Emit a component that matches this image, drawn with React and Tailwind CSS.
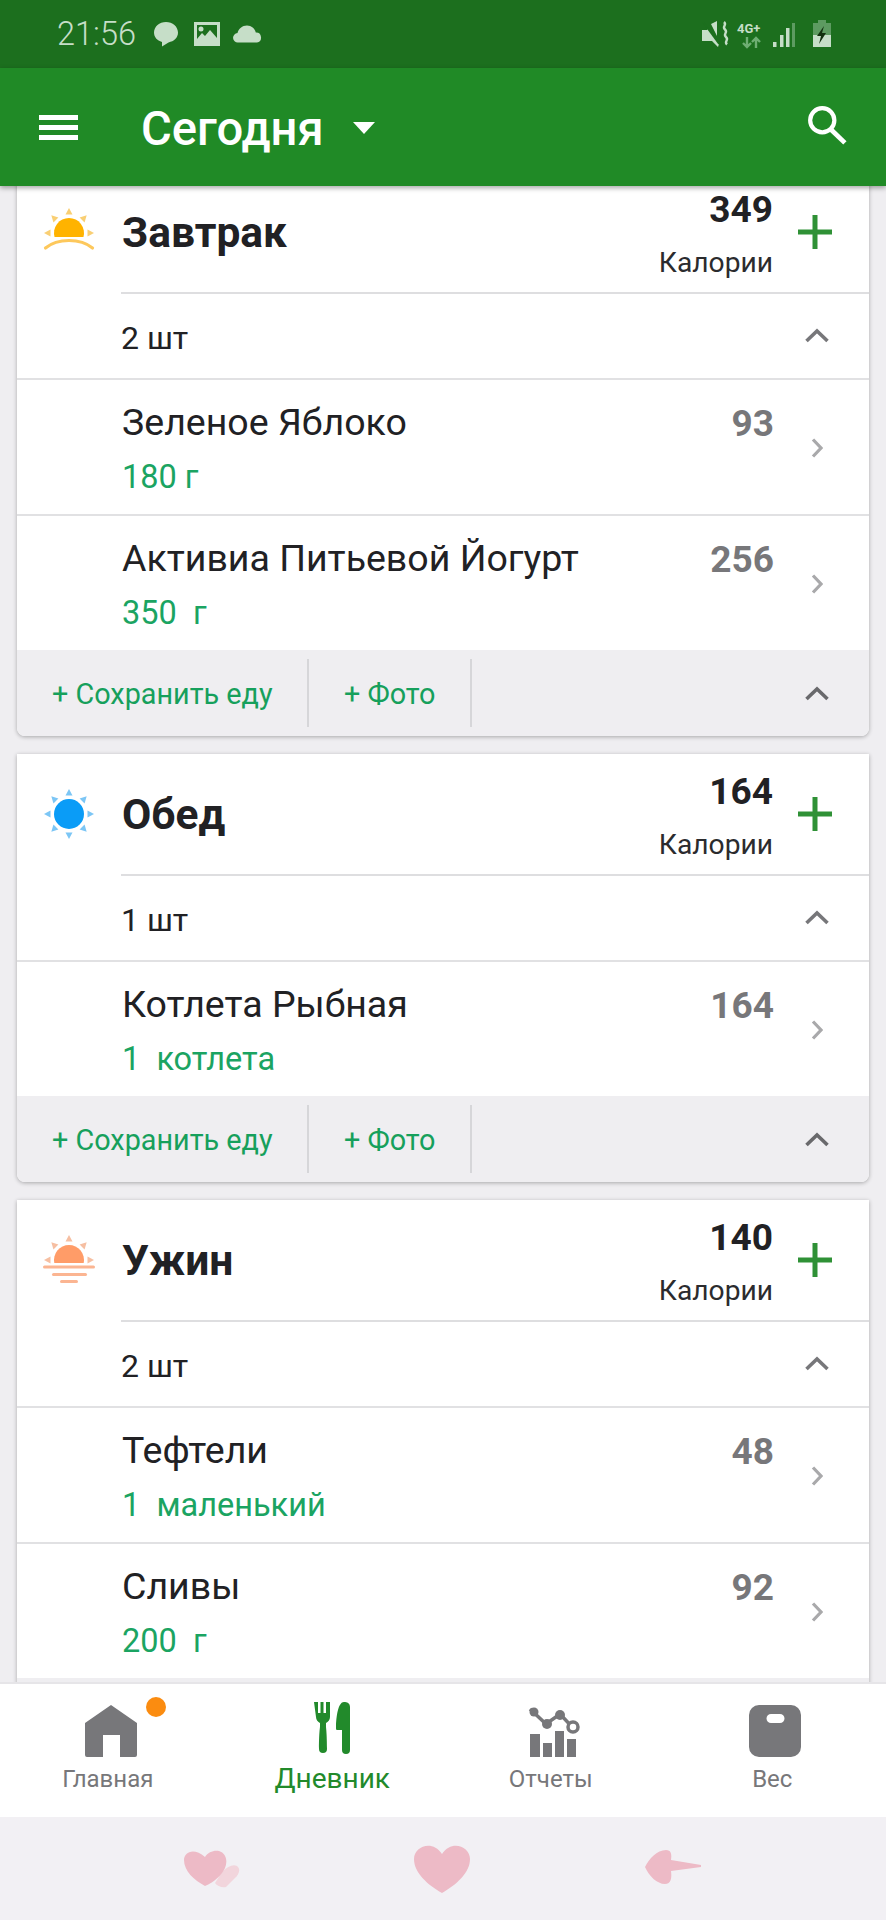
const SunRays = ({ color, cy = 26, rays }) => (
  <g fill={color}>
    {rays.map((a) => (
      <polygon key={a} points="26,1 29.5,7.5 22.5,7.5" transform={`rotate(${a} 26 ${cy}) translate(0 ${cy - 26})`} />
    ))}
  </g>
);

const BreakfastIcon = () => (
  <svg width="52" height="52" viewBox="0 0 52 52" className="shrink-0">
    <SunRays color="#f9cf74" cy={27} rays={[-90, -45, 0, 45, 90]} />
    <path d="M11.540 31A15 15 0 1 1 40.460 31z" fill="#ffb300" />
    <path d="M2.500 42c6-5 14-7.500 23.500-7.500S43.500 37 49.500 42" fill="none" stroke="#fdc85c" strokeWidth="3.2" strokeLinecap="round" />
  </svg>
);

const LunchIcon = () => (
  <svg width="52" height="52" viewBox="0 0 52 52" className="shrink-0">
    <SunRays color="#7cc6f5" cy={26} rays={[0, 45, 90, 135, 180, 225, 270, 315]} />
    <circle cx="26" cy="26" r="15" fill="#0a9cf7" />
  </svg>
);

const DinnerIcon = () => (
  <svg width="52" height="52" viewBox="0 0 52 52" className="shrink-0">
    <SunRays color="#f6bfa2" cy={26} rays={[-90, -45, 0, 45, 90]} />
    <path d="M11.300 29A15 15 0 1 1 40.700 29z" fill="#ff9c68" />
    <rect x="0" y="31.500" width="52" height="3" rx="1.500" fill="#fbb592" />
    <rect x="9" y="39" width="35" height="3" rx="1.500" fill="#fbb592" />
    <rect x="17" y="46" width="18" height="3" rx="1.500" fill="#fbb592" />
  </svg>
);

const ChevronUp = ({ className }) => (
  <svg width="26" height="16" viewBox="0 0 26 16" className={className}>
    <path d="M2.5 14L13 4l10.5 10" fill="none" stroke="currentColor" strokeWidth="3.6" />
  </svg>
);

const ChevronRight = () => (
  <svg width="12" height="22" viewBox="0 0 12 22" className="text-[#a9a9ab]">
    <path d="M2 2.5l8 8.5-8 8.5" fill="none" stroke="currentColor" strokeWidth="3.2" />
  </svg>
);

const PlusIcon = () => (
  <svg width="34" height="34" viewBox="0 0 34 34" className="shrink-0">
    <path d="M17 0v34M0 17h34" stroke="#2f9136" strokeWidth="5" />
  </svg>
);

const FoodRow = ({ name, amount, kcal }) => (
  <div className="flex h-[136px] items-start border-t-2 border-[#e1e1e3] pl-[105px]">
    <div className="flex-1 pt-[20px]">
      <div className="text-[37.5px] leading-[44px] text-[#212124]">{name}</div>
      <div className="mt-[11px] text-[32.5px] leading-[44px] whitespace-pre text-[#1ba462]">{amount}</div>
    </div>
    <div className="w-[100px] pt-[23px] text-right text-[37px] leading-[42px] font-bold text-[#77777a]">{kcal}</div>
    <div className="flex w-[95px] justify-center pt-[57px] pr-[10px]">
      <ChevronRight />
    </div>
  </div>
);

const MealCard = ({ icon, title, kcal, count, items, actions = true, className = '' }) => (
  <section className={`shrink-0 overflow-hidden rounded-b-lg bg-white shadow-[0_1px_4px_rgba(0,0,0,0.3)] ${className}`}>
    <div className="flex h-[120px] items-start pl-[26px]">
      <div className="flex h-full items-center">{icon}</div>
      <h2 className="flex h-full flex-1 items-center pt-[2px] pl-[27px] text-[42.5px] font-bold text-[#212124]">{title}</h2>
      <div className="pt-[19px] text-right">
        <div className="text-[37px] leading-[38px] font-bold text-[#212124]">{kcal}</div>
        <div className="mt-[16px] text-[28.2px] leading-[36px] text-[#2b2b2e]">Калории</div>
      </div>
      <div className="flex h-full items-center pr-[37px] pl-[25px]">
        <PlusIcon />
      </div>
    </div>
    <div className="ml-[104px] border-t-2 border-[#dedee0]" />
    <div className="flex h-[84px] items-center justify-between pr-[39px] pl-[104px]">
      <span className="pt-[3px] text-[32px] text-[#212124]">{count}</span>
      <ChevronUp className="mb-[2px] text-[#77777a]" />
    </div>
    {items.map((item) => (
      <FoodRow key={item.name} {...item} />
    ))}
    <div className="flex h-[86px] items-center bg-[#efeef1] pr-[39px] text-[28.8px] text-[#16a05c]">
      {actions && (
        <>
          <span className="flex h-[68px] w-[292px] items-center border-r-2 border-[#d6d6d9] pt-[3px] pl-[35px]">+ Сохранить еду</span>
          <span className="flex h-[68px] w-[163px] items-center border-r-2 border-[#d6d6d9] pt-[3px] pl-[35px]">+ Фото</span>
          <ChevronUp className="ml-auto text-[#69696c]" />
        </>
      )}
    </div>
  </section>
);

const StatusBar = () => (
  <div className="flex h-[68px] shrink-0 items-center bg-[#1c6f1e] pr-[54px] pl-[57px] text-[#c6dec8]">
    <span className="w-[96px] text-[32.5px] font-light">21:56</span>
    <svg width="26" height="26" viewBox="0 0 26 26" className="mr-[15px]" fill="currentColor">
      <path d="M13 1c6.600 0 12 4.600 12 10.600 0 5.200-4 9-9.500 9.800L9 25.500V21C4 19.800 1 16 1 11.600 1 5.600 6.400 1 13 1z" />
    </svg>
    <svg width="26" height="26" viewBox="0 0 26 26" className="mr-[13px]" fill="currentColor">
      <path fillRule="evenodd" d="M0 1h26v24H0zM3 4v14l5-6 3 3 5-6 7 8V4zM7 5.500a2.500 2.500 0 1 1 0 5 2.500 2.500 0 0 1 0-5z" />
    </svg>
    <svg width="29" height="18" viewBox="0 0 29 18" fill="currentColor">
      <path d="M5 17.500a4.700 4.700 0 0 1-.500-9.400C5.600 3.700 9.200.500 14 .500c4.400 0 7.900 3 8.800 7.100a5 5 0 0 1 1.200 9.900z" />
    </svg>
    <svg width="132" height="30" viewBox="0 0 132 30" className="ml-auto" fill="currentColor">
      <path d="M2 11h5l1-1 11 15-1 3-6-6H2zM11 5l6-3v15z" />
      <path d="M3 3l16 22" fill="none" stroke="#1c6f1e" strokeWidth="1.500" />
      <path d="M24 3c3.500 3-2.500 4.500 1 7.500s-2.500 4.500 1 7.500-2.500 4.500 1 7.500" fill="none" stroke="currentColor" strokeWidth="2.400" />
      <text x="37" y="14" fontSize="13" fontWeight="700" fontFamily="Roboto, sans-serif">4G+</text>
      <path d="M47 18v10M43 24l4 4 4-4M56 29V19M52 23l4-4 4 4" fill="none" stroke="#6fae73" strokeWidth="2.400" />
      <rect x="73" y="23" width="3.500" height="5" />
      <rect x="80" y="16" width="3.500" height="12" />
      <rect x="86" y="9" width="3.500" height="19" />
      <rect x="92" y="4" width="3" height="24" fill="#5d9b61" />
      <path d="M118 1h8v3h5v24h-18V4h5z" fill="#5d9b61" />
      <rect x="113" y="16" width="18" height="12" />
      <path d="M124 7l-7 10h4l-2 8 7-11h-4z" fill="#12300f" />
    </svg>
  </div>
);

const TopBar = () => (
  <header className="relative z-10 flex h-[118px] shrink-0 items-center bg-[#208a26] pr-[39px] pl-[39px] text-white shadow-[0_2px_5px_rgba(0,0,0,0.35)]">
    <div className="flex w-[39px] flex-col gap-[5px]">
      <span className="h-[5px] bg-white" />
      <span className="h-[5px] bg-white" />
      <span className="h-[5px] bg-white" />
    </div>
    <h1 className="mt-[4px] ml-[63px] text-[47.2px] font-medium">Сегодня</h1>
    <svg width="22" height="12" viewBox="0 0 22 12" className="mt-[2px] ml-[29px]" fill="white">
      <path d="M0 0h22L11 12z" />
    </svg>
    <svg width="40" height="40" viewBox="0 0 38 38" className="mt-[-4px] ml-auto" fill="none" stroke="white">
      <circle cx="14.500" cy="14.500" r="11.500" strokeWidth="4" />
      <path d="M22.500 23L36 36" strokeWidth="4.500" />
    </svg>
  </header>
);

const NavItem = ({ icon, label, active, badge }) => (
  <div className={`relative flex flex-col items-center ${active ? 'text-[#228a2b]' : 'text-[#77777a]'}`}>
    <div className="flex h-[74px] items-end pb-[1px]">{icon}</div>
    {badge && <span className="absolute top-[13px] left-[146px] h-[20px] w-[20px] rounded-full bg-[#fb8c10]" />}
    <span className={active ? 'mt-[3px] text-[28px] leading-[36px]' : 'mt-[3px] -ml-[6px] text-[24px] leading-[36px]'}>{label}</span>
  </div>
);

const BottomNav = () => (
  <nav className="relative z-10 grid h-[135px] shrink-0 grid-cols-4 border-t-2 border-[#e6e5e8] bg-white">
    <NavItem
      badge
      label="Главная"
      icon={
        <svg width="52" height="52" viewBox="0 0 52 52" fill="currentColor">
          <path fillRule="evenodd" d="M26 0l26 18v32a2 2 0 0 1-2 2H35V30H18v22H2a2 2 0 0 1-2-2V18z" />
        </svg>
      }
    />
    <NavItem
      active
      label="Дневник"
      icon={
        <svg width="36" height="52" viewBox="0 0 36 52" fill="currentColor" className="mb-[3px]">
          <path d="M0 0h4v11h2.500V0h3v11H12V0h4v15c0 3-2 5-4 6v3c0 3 1 6 1 23a4 4 0 0 1-8 0c0-17 1-20 1-23v-3c-2-1-4-3-4-6z" />
          <path d="M30 0c3 0 6 1 6 5v43a4 4 0 0 1-8 0V28h-5c-1 0-1-1-1-2C22 20 23 0 30 0z" />
        </svg>
      }
    />
    <NavItem
      label="Отчеты"
      icon={
        <svg width="52" height="50" viewBox="0 0 52 50" fill="currentColor">
          <path d="M2 2l16 15 14-10 16 17" fill="none" stroke="currentColor" strokeWidth="3.500" />
          <circle cx="6" cy="5" r="4.500" />
          <circle cx="19" cy="17" r="5" />
          <circle cx="32" cy="8" r="5" />
          <circle cx="45" cy="20" r="5" fill="white" stroke="currentColor" strokeWidth="3.500" />
          <rect x="2" y="27" width="10" height="23" />
          <rect x="15" y="36" width="9" height="14" />
          <rect x="27" y="24" width="9" height="26" />
          <rect x="39" y="32" width="9" height="18" />
        </svg>
      }
    />
    <NavItem
      label="Вес"
      icon={
        <svg width="52" height="52" viewBox="0 0 52 52" fill="currentColor">
          <path fillRule="evenodd" d="M10 0h32a10 10 0 0 1 10 10v32a10 10 0 0 1-10 10H10A10 10 0 0 1 0 42V10A10 10 0 0 1 10 0zm12 9a4.500 4.500 0 0 0 0 9h9a4.500 4.500 0 0 0 0-9z" />
        </svg>
      }
    />
  </nav>
);

const Hearts = () => (
  <div className="relative h-[103px] shrink-0 bg-[#f2f0f4]">
    <svg width="56" height="38" viewBox="0 0 56 38" className="absolute top-[33px] left-[184px]">
      <path d="M38 22c6-6 11-8 15-6 4 3 2 8-2 12l-9 9c-4 1-9-1-11-4z" fill="#f2d5dc" />
      <path d="M21 36C10 30 0 21 0 10 0 2 10-3 21 7c3-5 9-7 14-6 7 2 9 10 6 17-4 8-11 14-20 18z" fill="#edbac6" />
    </svg>
    <svg width="56" height="48" viewBox="0 0 56 48" className="absolute top-[28px] left-[414px]">
      <path d="M28 48C14 40 0 28 0 14 0 2 18-6 28 9 38-6 56 2 56 14c0 14-14 26-28 34z" fill="#edbac6" />
    </svg>
    <svg width="56" height="34" viewBox="0 0 56 34" className="absolute top-[33px] left-[645px]">
      <path d="M0 17C4 9 12 0 21 0c5 0 6 4 5 10l30 5v2l-30 4c1 7 0 13-6 13C12 34 4 26 0 17z" fill="#edbac6" />
    </svg>
  </div>
);

export default function App() {
  return (
    <div className="flex h-[1920px] w-[886px] flex-col overflow-hidden bg-[#efeef1] font-[Roboto,sans-serif]">
      <StatusBar />
      <TopBar />
      <main className="flex min-h-0 flex-1 flex-col gap-[18px] overflow-hidden px-[17px]">
        <MealCard
          className="-mt-[14px]"
          icon={<BreakfastIcon />}
          title="Завтрак"
          kcal="349"
          count="2 шт"
          items={[
            { name: 'Зеленое Яблоко', amount: '180 г', kcal: '93' },
            { name: 'Активиа Питьевой Йогурт', amount: '350  г', kcal: '256' },
          ]}
        />
        <MealCard
          icon={<LunchIcon />}
          title="Обед"
          kcal="164"
          count="1 шт"
          items={[{ name: 'Котлета Рыбная', amount: '1  котлета', kcal: '164' }]}
        />
        <MealCard
          actions={false}
          icon={<DinnerIcon />}
          title="Ужин"
          kcal="140"
          count="2 шт"
          items={[
            { name: 'Тефтели', amount: '1  маленький', kcal: '48' },
            { name: 'Сливы', amount: '200  г', kcal: '92' },
          ]}
        />
      </main>
      <BottomNav />
      <Hearts />
    </div>
  );
}
